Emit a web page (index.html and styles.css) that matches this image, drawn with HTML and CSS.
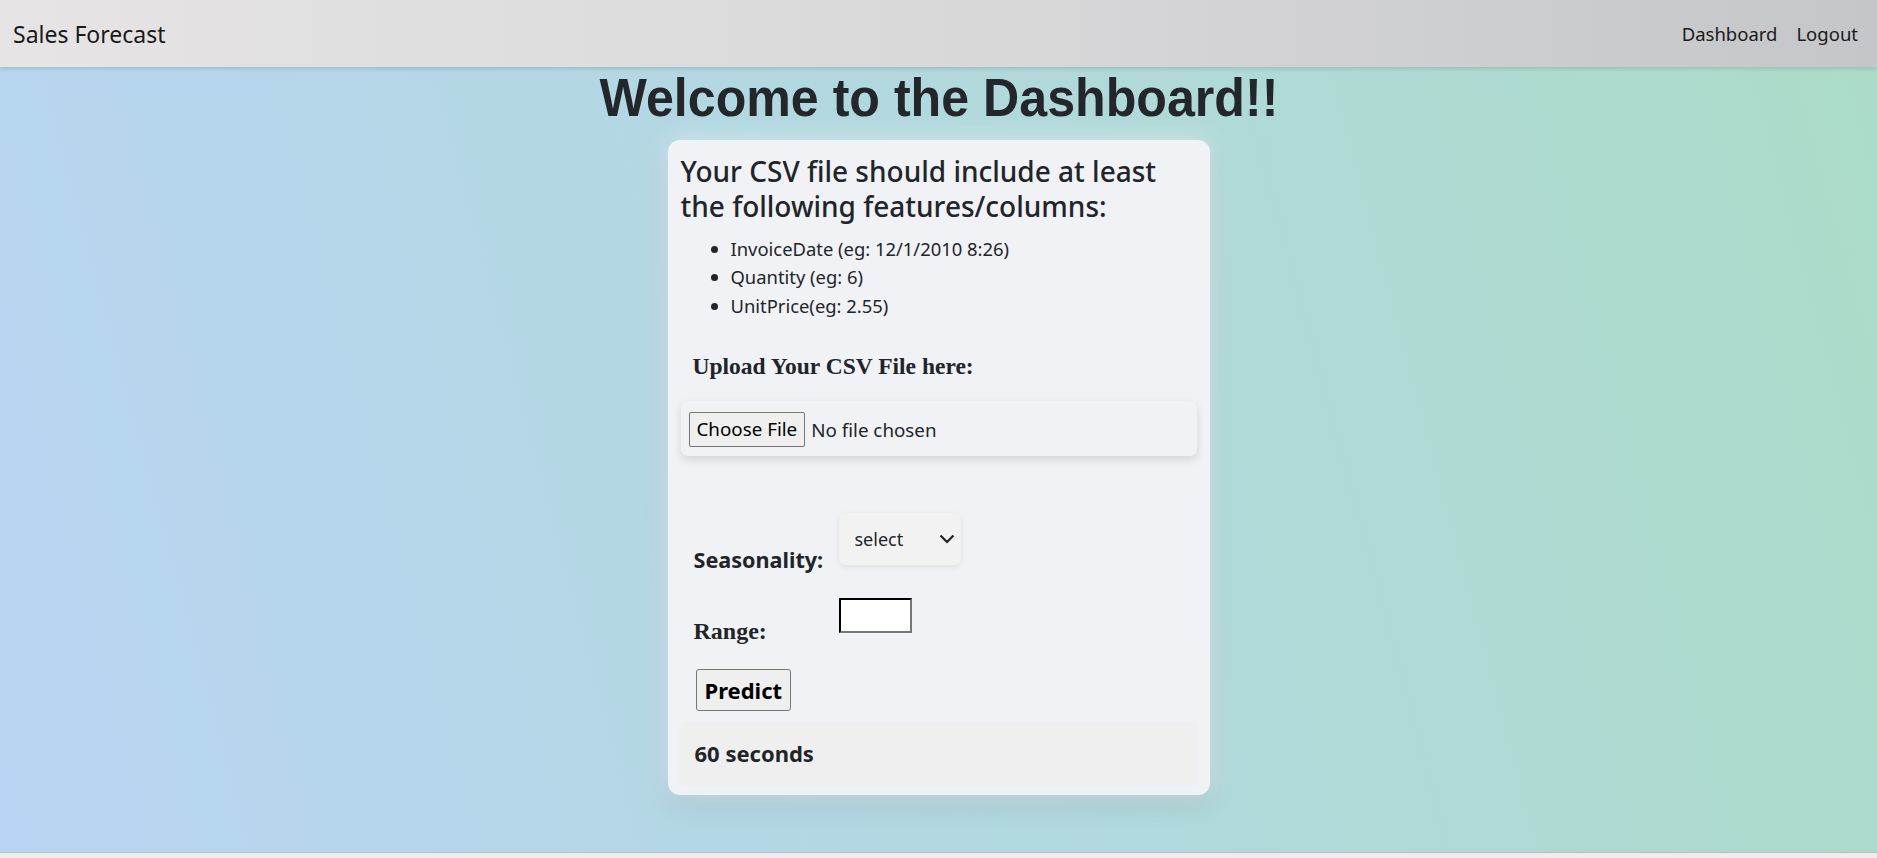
FILE: index.html
```html
<!DOCTYPE html>
<html lang="en">
<head>
<meta charset="utf-8">
<title>Sales Forecast</title>
<link rel="stylesheet" href="styles.css">
</head>
<body>
<nav class="navbar">
  <a class="brand" href="#">Sales Forecast</a>
  <div class="nav-links">
    <a href="#">Dashboard</a>
    <a href="#">Logout</a>
  </div>
</nav>
<main class="main">
  <div class="title-row"><h1 class="title">Welcome to the Dashboard!!</h1></div>
  <section class="card">
    <h3 class="card-title">Your CSV file should include at least the following features/columns:</h3>
    <ul class="features">
      <li>InvoiceDate (eg: 12/1/2010 8:26)</li>
      <li>Quantity (eg: 6)</li>
      <li>UnitPrice(eg: 2.55)</li>
    </ul>
    <form class="form">
      <label class="upload-label">Upload Your CSV File here:</label>
      <div class="file-box">
        <input type="file" class="file-input">
      </div>
      <div class="fields">
        <label class="lbl-sans">Seasonality:</label>
        <div class="select-wrap">
          <select class="select">
            <option>select</option>
          </select>
        </div>
        <label class="lbl-serif">Range:</label>
        <div class="input-wrap"><input type="text" class="range-input"></div>
      </div>
      <button type="button" class="predict">Predict</button>
    </form>
    <div class="timer">60 seconds</div>
  </section>
</main>
<footer class="footer"></footer>
</body>
</html>
```

FILE: styles.css
```css
* { box-sizing: border-box; }
html, body { margin: 0; padding: 0; }
body {
  font-family: "Noto Sans", "Open Sans", sans-serif;
  color: #212529;
  height: 858px;
  overflow: hidden;
  background: #eeeeee;
}
.navbar {
  height: 67px;
  display: flex;
  align-items: center;
  justify-content: space-between;
  padding: 0 19px 0 13px;
  background: linear-gradient(90deg, #e6e4e4 0%, #d9d9da 50%, #c5c6c9 100%);
  box-shadow: 0 2px 4px rgba(0,0,0,0.12);
  position: relative;
  z-index: 2;
}
.brand {
  color: #1a1a1a;
  text-decoration: none;
  font-size: 23px;
}
.nav-links { display: flex; gap: 19px; }
.nav-links a {
  color: #1a1a1a;
  text-decoration: none;
  font-size: 18.5px;
}
.main {
  height: 785px;
  background: linear-gradient(75deg, #b8d5f3 0%, #b2d8df 50%, #acdcc9 100%);
  overflow: hidden;
}
.title-row { text-align: center; }
.title {
  display: inline-block;
  margin: 0;
  font-family: "Liberation Sans", Arial, sans-serif;
  font-weight: 700;
  font-size: 54.5px;
  line-height: 1.15;
  color: #23272b;
  transform: scaleX(0.92);
}
.card {
  width: 542px;
  height: 655px;
  margin: 10px auto 0;
  background: #f1f2f6;
  border-radius: 12px;
  padding: 14px 13px 11px;
  box-shadow: 0 0 24px rgba(255,255,255,0.55), 0 10px 24px rgba(0,0,0,0.12);
  display: flex;
  flex-direction: column;
}
.card-title {
  margin: 0;
  font-size: 28px;
  font-weight: 500;
  line-height: 35px;
}
.features {
  margin: 11px 0 0;
  padding-left: 50px;
  font-size: 18.4px;
  line-height: 28.7px;
}
.form { display: flex; flex-direction: column; align-items: flex-start; }
.upload-label {
  margin: 30px 0 0 12px;
  font-family: "Liberation Serif", serif;
  font-weight: 700;
  font-size: 23.5px;
  line-height: 30px;
}
.file-box {
  align-self: stretch;
  margin-top: 20px;
  height: 55px;
  padding: 11px 8px;
  background: #f1f2f6;
  border-radius: 7px;
  box-shadow: 0 4px 10px rgba(0,0,0,0.12);
}
.file-input {
  font-family: "Noto Sans", sans-serif;
  font-size: 18.8px;
  color: #212529;
}
.file-input::file-selector-button {
  font-family: "Noto Sans", sans-serif;
  font-size: 18.8px;
  height: 35px;
  padding: 0 7px;
  margin-right: 6px;
  background: #efefef;
  border: 1px solid #767676;
  border-radius: 2px;
  color: #000;
}
.fields {
  margin: 57px 0 0 13px;
  display: grid;
  grid-template-columns: 145px auto;
  row-gap: 25px;
}
.lbl-sans {
  align-self: end;
  font-weight: 700;
  font-size: 21.6px;
  line-height: 27px;
}
.lbl-serif {
  align-self: end;
  font-family: "Liberation Serif", serif;
  font-weight: 700;
  font-size: 24px;
  line-height: 27px;
}
.select-wrap { align-self: start; padding-bottom: 8px; }
.input-wrap { align-self: start; padding-bottom: 12px; }
.select {
  display: block;
  width: 122px;
  height: 52px;
  padding: 0 16px;
  font-family: "Noto Sans", sans-serif;
  font-size: 18px;
  color: #212529;
  background: #f2f2f2 url("data:image/svg+xml;utf8,<svg xmlns='http://www.w3.org/2000/svg' width='16' height='10' viewBox='0 0 16 10'><path d='M1.5 1.5l6.5 6.5 6.5-6.5' fill='none' stroke='%23222' stroke-width='2.2'/></svg>") no-repeat right 6px center;
  border: none;
  border-radius: 7px;
  box-shadow: 0 2px 6px rgba(0,0,0,0.08);
  appearance: none;
  -webkit-appearance: none;
}
.range-input {
  display: block;
  width: 73px;
  height: 35px;
  border: 2px inset #767676;
  border-top-color: #222;
  border-left-color: #222;
  background: #fff;
}
.predict {
  margin: 24px 0 0 15px;
  height: 42px;
  padding: 0 8px;
  font-family: "Noto Sans", sans-serif;
  font-weight: 700;
  font-size: 22px;
  background: #efefef;
  border: 1px solid #767676;
  border-radius: 3px;
  color: #000;
}
.timer {
  margin-top: auto;
  height: 61px;
  display: flex;
  align-items: center;
  padding-left: 14px;
  background: #efefef;
  border-radius: 3px;
  box-shadow: 0 0 5px rgba(0,0,0,0.03);
  font-weight: 700;
  font-size: 22px;
}
.footer {
  height: 6px;
  border-top: 1px solid #bbbbbb;
  background: #eeeeee;
}
```
